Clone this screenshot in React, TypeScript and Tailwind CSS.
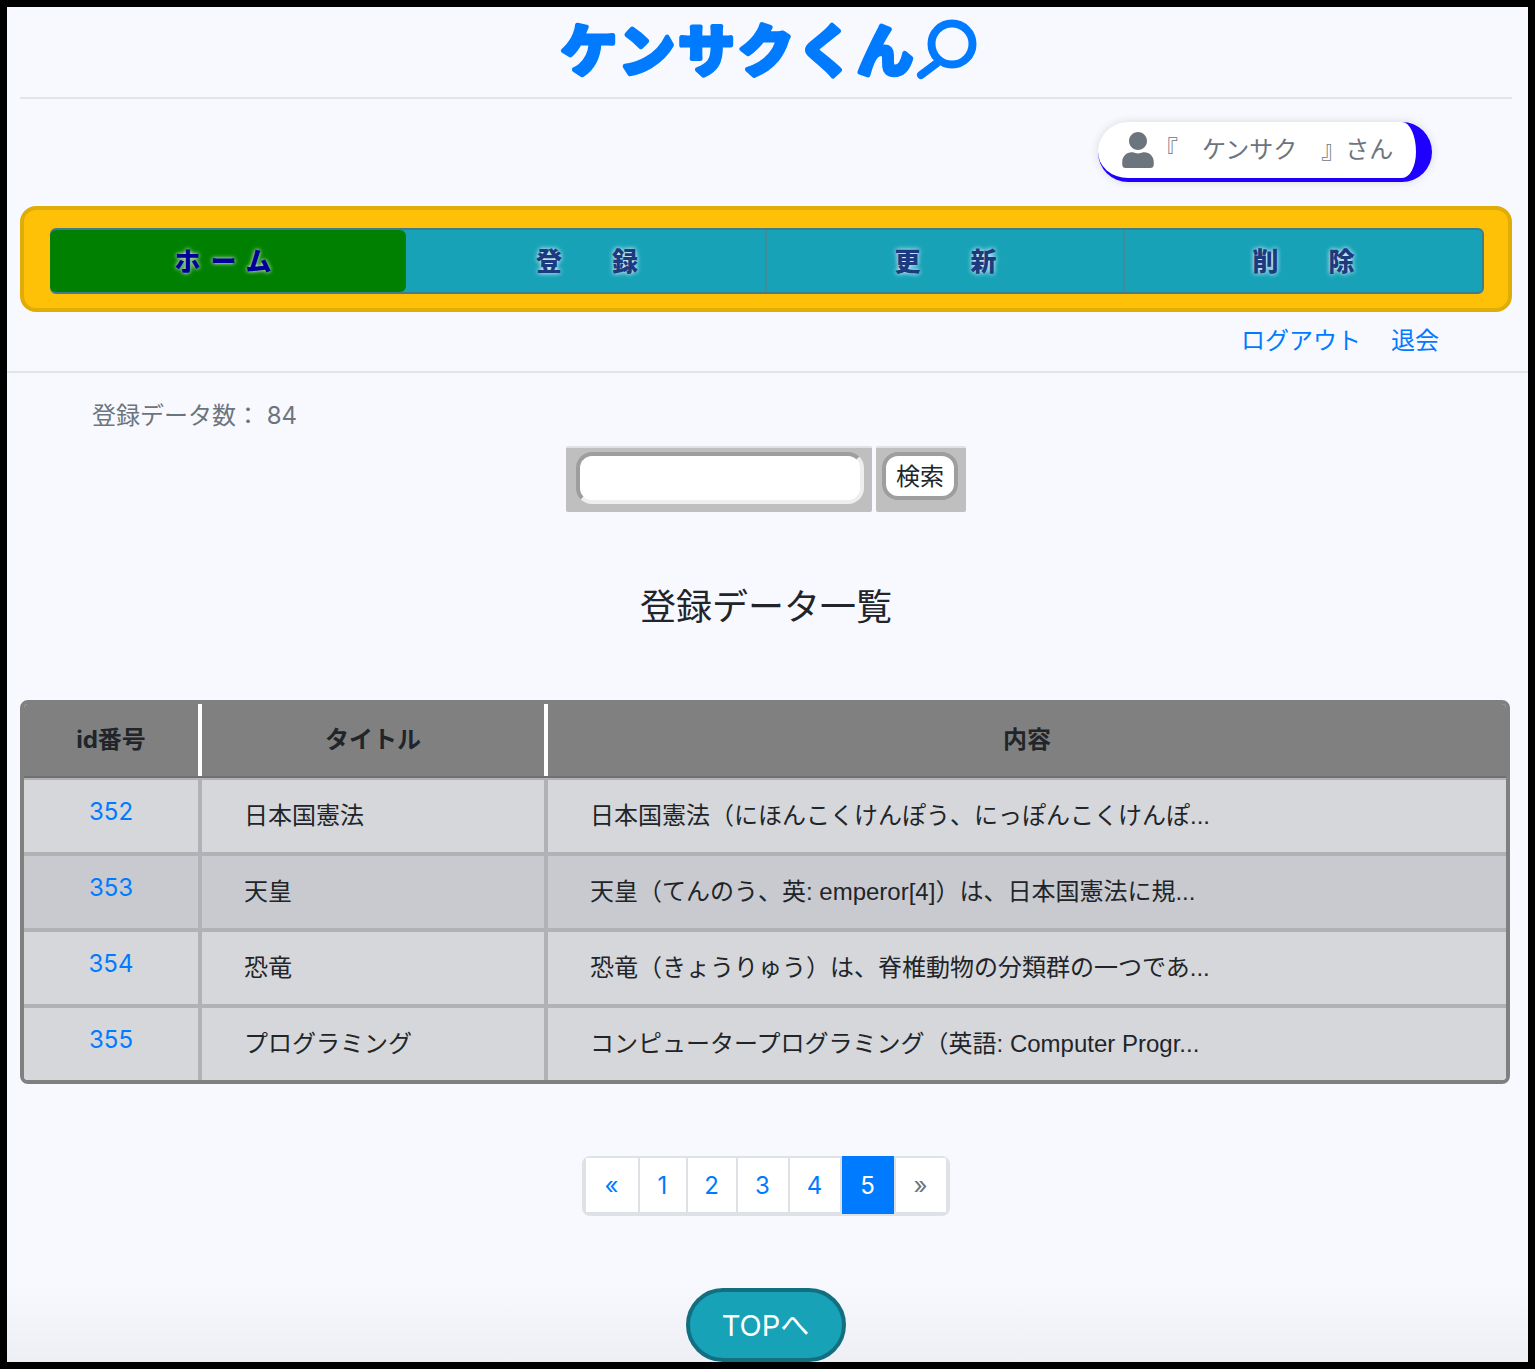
import { FaUser } from 'react-icons/fa';

const navItems = [
  { label: '登', label2: '録', cls: 'w-[359px] pl-[3px]' },
  { label: '更', label2: '新', cls: 'w-[358px] border-l-2 border-[#3f8c9c] pl-[1px]' },
  { label: '削', label2: '除', cls: 'flex-1 border-l-2 border-[#3f8c9c]' },
];

const rows = [
  { id: 352, title: '日本国憲法', body: '日本国憲法（にほんこくけんぽう、にっぽんこくけんぽ...', bg: 'bg-[#d6d7db]' },
  { id: 353, title: '天皇', body: '天皇（てんのう、英: emperor[4]）は、日本国憲法に規...', bg: 'bg-[#c9cacf]' },
  { id: 354, title: '恐竜', body: '恐竜（きょうりゅう）は、脊椎動物の分類群の一つであ...', bg: 'bg-[#d6d7db]' },
  { id: 355, title: 'プログラミング', body: 'コンピュータープログラミング（英語: Computer Progr...', bg: 'bg-[#d6d7db]' },
];

const pages = [
  { label: '«', cls: 'w-[52px] h-[54px] bg-white text-[#007bff]' },
  { label: '1', cls: 'w-[46px] h-[54px] bg-white text-[#007bff]' },
  { label: '2', cls: 'w-[48px] h-[54px] bg-white text-[#007bff]' },
  { label: '3', cls: 'w-[50px] h-[54px] bg-white text-[#007bff]' },
  { label: '4', cls: 'w-[50px] h-[54px] bg-white text-[#007bff]' },
  { label: '5', cls: 'w-[52px] h-[58px] bg-[#007bff] text-white -mt-[2px]' },
  { label: '»', cls: 'w-[50px] h-[54px] bg-white text-[#6c757d]' },
];

export default function App() {
  return (
    <div className="h-[1369px] w-[1535px] overflow-hidden border-[7px] border-black bg-[linear-gradient(to_bottom,#f8f9ff_94%,#eeeef5_100%)] font-['Inter','Noto_Sans_CJK_JP',sans-serif] text-[24px] leading-none text-[#212529]">
      {/* Header */}
      <div className="ml-[13px] flex h-[92px] w-[1492px] items-start justify-center border-b-2 border-[#e3e4e8] pl-[4px]">
        <svg className="h-[84px] w-[424px]" viewBox="556 7 424 84" fill="none">
          <text
            x="561"
            y="71"
            fontSize="56"
            fontWeight="700"
            fill="#007bff"
            stroke="#007bff"
            strokeWidth="5"
            strokeLinejoin="round"
            textLength="352"
            fontFamily="'Noto Sans CJK JP', sans-serif"
          >
            ケンサクくん
          </text>
          <circle cx="952" cy="44" r="20.5" stroke="#007bff" strokeWidth="8" />
          <path d="M937 63 L921 75" stroke="#007bff" strokeWidth="8" strokeLinecap="round" />
        </svg>
      </div>

      {/* User */}
      <div className="mt-[23px] ml-[13px] flex w-[1492px] justify-end pr-[80px]">
        <div className="flex h-[60px] w-[334px] items-start rounded-full border-r-[16px] border-b-4 border-[#1f00ff] bg-white pt-[10px] pl-[24px] text-[#6c757d] shadow-[0_0_8px_#d8d8de]">
          <FaUser className="h-[36px] w-[32px]" />
          <span className="mt-[6px] whitespace-nowrap">『　ケンサク　』さん</span>
        </div>
      </div>

      {/* Nav */}
      <div className="mt-[24px] ml-[13px] h-[106px] w-[1492px] rounded-[16px] border-4 border-[#e0ac08] bg-[#ffc107] pt-[18px] pr-[24px] pl-[26px]">
        <div className="flex h-[66px] rounded-[6px] border-2 border-[#3f7d8c] bg-[#17a2b8]">
          <div className="-ml-[2px] flex w-[356px] items-center justify-center rounded-[6px] bg-[#008000] pt-[1px] text-[26px] font-black tracking-[10px] text-[#000099] [text-shadow:0_0_4px_#ffffff]">
            ホーム
          </div>
          {navItems.map((item) => (
            <div
              key={item.label}
              className={`flex items-center justify-center gap-[50px] pt-[1px] text-[26px] font-black text-[#1c3a80] [text-shadow:0_0_5px_#ffffff] ${item.cls}`}
            >
              <span>{item.label}</span>
              <span>{item.label2}</span>
            </div>
          ))}
        </div>
      </div>

      {/* Links */}
      <div className="ml-[13px] flex h-[59px] w-[1492px] items-start justify-end gap-[30px] pt-[17px] pr-[73px] text-[#007bff]">
        <span>ログアウト</span>
        <span>退会</span>
      </div>
      <div className="border-t-2 border-[#e3e4e8]" />

      <p className="mt-[31px] ml-[85px] text-[#6c757d]">登録データ数： 84</p>

      {/* Search */}
      <div className="mt-[18px] flex justify-center gap-[4px] pr-[4px]">
        <div className="h-[66px] w-[306px] rounded-[2px] border-t-2 border-[#dfe1e5] bg-[#bfbfbf] px-[10px] pt-[4px]">
          <div className="h-[52px] w-[288px] rounded-[16px] border-4 border-t-[#9e9e9e] border-r-[#eeeeee] border-b-[#eeeeee] border-l-[#9e9e9e] bg-white" />
        </div>
        <div className="h-[66px] w-[90px] rounded-[2px] border-t-2 border-[#dfe1e5] bg-[#bfbfbf] px-[6px] pt-[4px]">
          <div className="flex h-[48px] w-[76px] items-center justify-center rounded-[16px] border-4 border-[#9e9e9e] bg-white pt-[1px] pl-[1px]">検索</div>
        </div>
      </div>

      <h2 className="mt-[73px] pr-[3px] text-center text-[36px] leading-[44px]">登録データ一覧</h2>

      {/* Table */}
      <div className="mt-[71px] ml-[13px] w-[1490px] overflow-hidden rounded-[8px] border-4 border-[#808080]">
        <div className="grid h-[74px] grid-cols-[178px_346px_1fr] border-b-2 border-[#707070] bg-[#808080] text-center font-bold">
          <div className="flex items-center justify-center border-r-4 border-white">id番号</div>
          <div className="flex items-center justify-center border-r-4 border-white">タイトル</div>
          <div className="flex items-center justify-center">内容</div>
        </div>
        {rows.map((row, i) => (
          <div key={row.id} className={`grid grid-cols-[178px_346px_1fr] border-[#b0b2b6] ${row.bg} ${i === 0 ? 'h-[74px] border-t-2' : 'h-[76px] border-t-4'}`}>
            <div className="border-r-4 border-[#b0b2b6] pt-[20px] text-center text-[#007bff]">{row.id}</div>
            <div className="flex items-center border-r-4 border-[#b0b2b6] pl-[42px]">{row.title}</div>
            <div className="flex items-center pl-[42px] font-['Liberation_Sans','Noto_Sans_CJK_JP',sans-serif] whitespace-nowrap">{row.body}</div>
          </div>
        ))}
      </div>

      {/* Pagination */}
      <div className="mt-[72px] flex justify-center pr-[4px]">
        <div className="flex h-[60px] w-[368px] items-start gap-[2px] rounded-[8px] border-x-4 border-t-2 border-b-4 border-[#dee2e6] bg-[#dee2e6]">
          {pages.map((p) => (
            <div key={p.label} className={`flex items-center justify-center pt-[2px] ${p.cls}`}>
              {p.label}
            </div>
          ))}
        </div>
      </div>

      {/* Top */}
      <div className="mt-[72px] flex justify-center pr-[4px]">
        <div className="flex h-[74px] w-[160px] items-center justify-center rounded-full border-4 border-[#136f80] bg-[#17a2b8] text-[29px] text-white">
          TOPへ
        </div>
      </div>
    </div>
  );
}
